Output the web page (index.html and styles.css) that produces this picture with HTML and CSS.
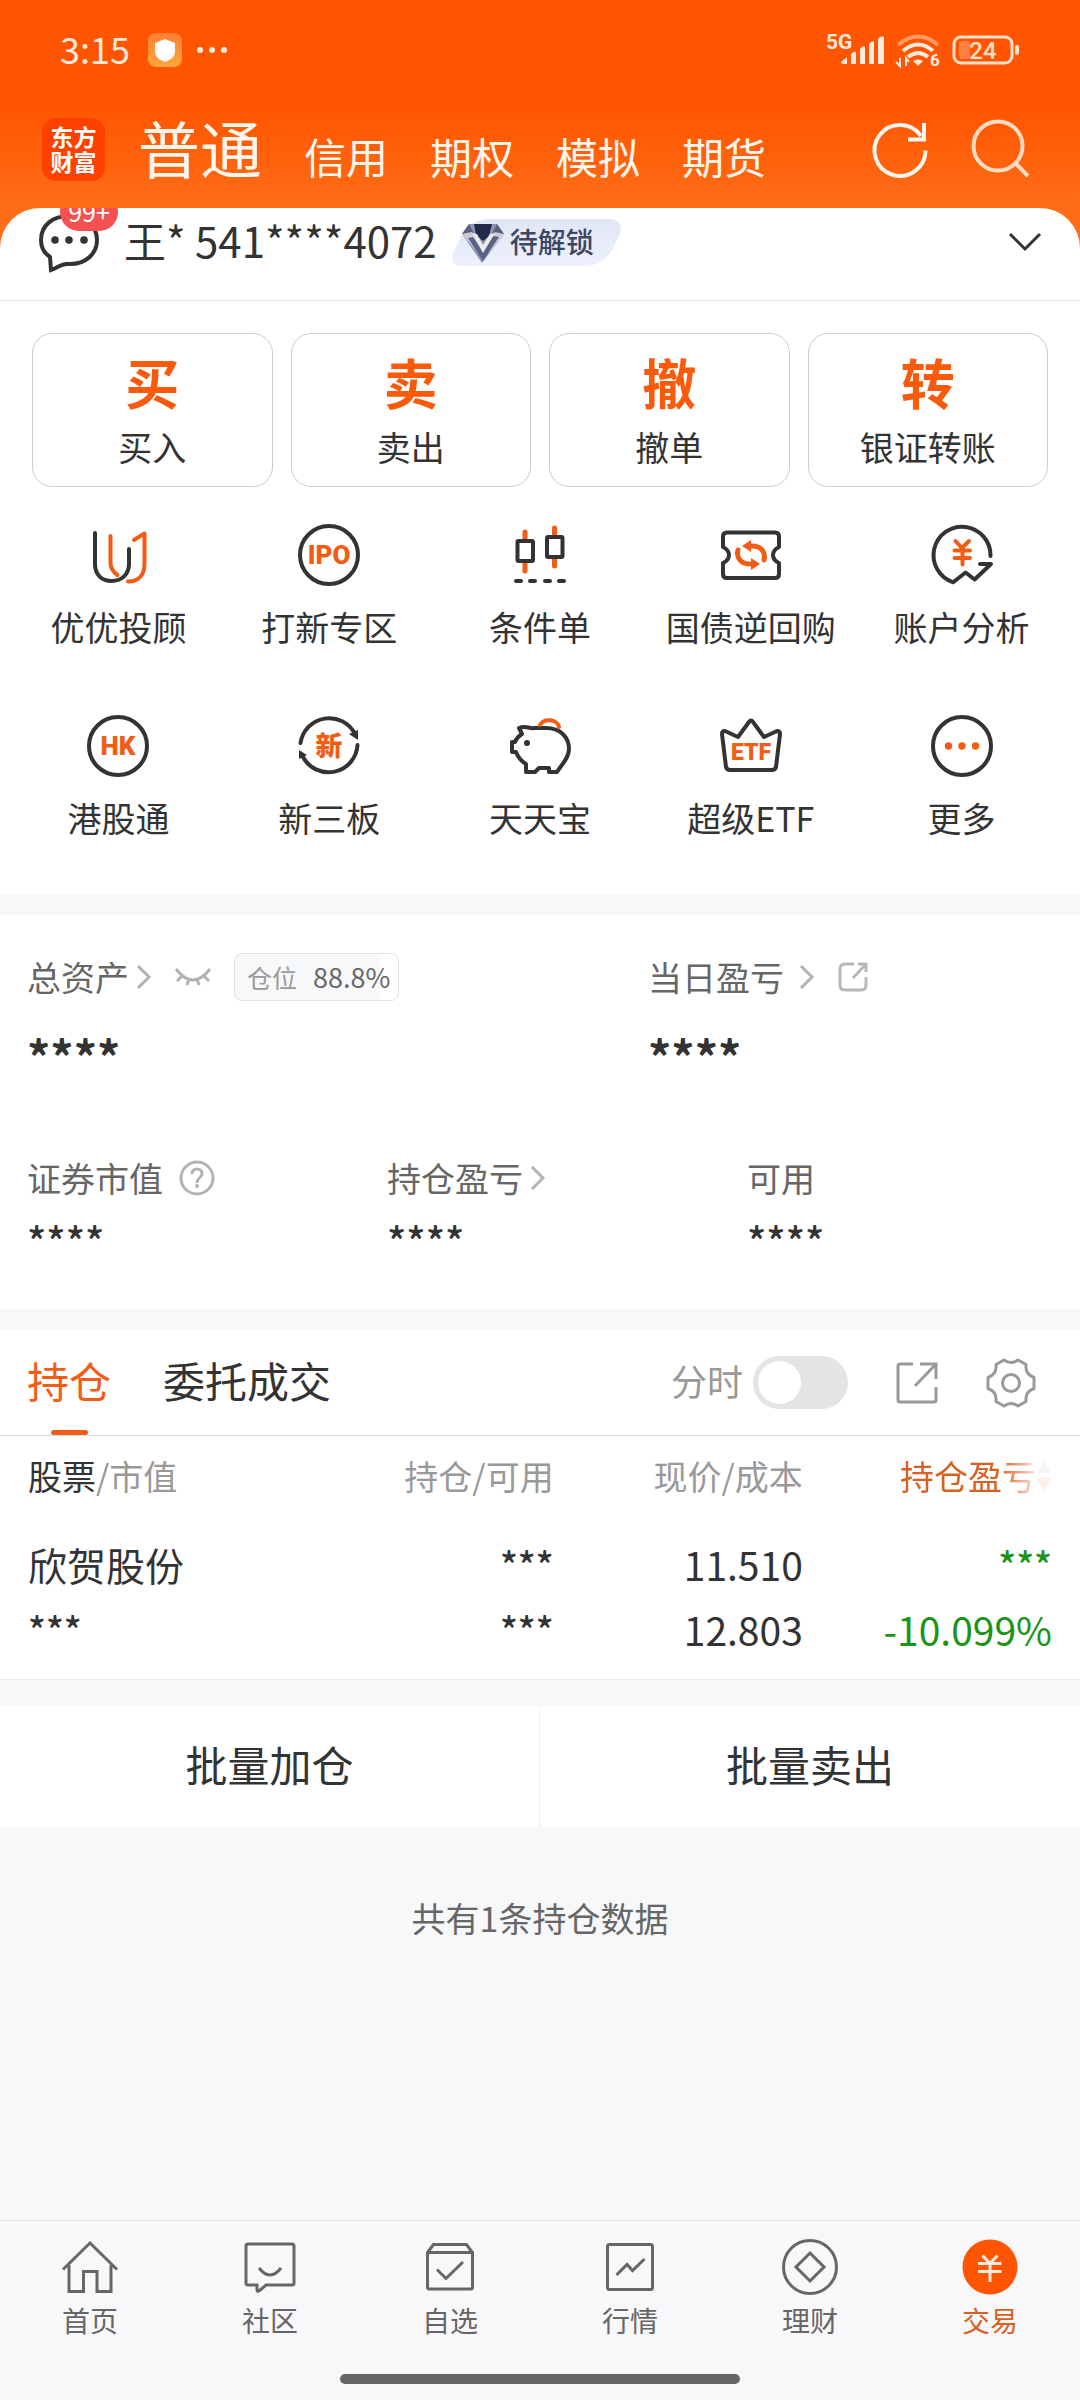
FILE: index.html
```html
<!DOCTYPE html>
<html lang="zh-CN">
<head>
<meta charset="utf-8">
<meta name="viewport" content="width=device-width, initial-scale=1">
<title>交易</title>
<link rel="stylesheet" href="styles.css">
</head>
<body>
<header class="top">
  <div class="status">
    <span class="time">3:15</span>
    <svg class="app-badge" width="34" height="34" viewBox="0 0 34 34"><defs><linearGradient id="g1" x1="0" y1="0" x2="0" y2="1"><stop offset="0" stop-color="#ff7f32"/><stop offset="1" stop-color="#ffa63c"/></linearGradient></defs><rect width="34" height="34" rx="8" fill="url(#g1)"/><path d="M17 6l10 4v9c0 5-5 8-10 10-5-2-10-5-10-10v-9z" fill="#fff"/></svg>
    <svg class="dots" width="32" height="8" viewBox="0 0 32 8" fill="#ffeadd"><circle cx="4" cy="4" r="3"/><circle cx="16" cy="4" r="3"/><circle cx="28" cy="4" r="3"/></svg>
    <svg class="signal" width="58" height="34" viewBox="0 0 58 34" fill="#ffeadd"><text x="0" y="16" class="t5g">5G</text><path d="M15 29l6-5v7h-4q-2 0-2-2zM25 21q3-3 5-2v12h-5zM34 16q3-4 5-2v17h-5zM43 11q3-4 5-2v22h-5zM52 6q3-4 6-2v27h-6z"/></svg>
    <svg class="wifi" width="44" height="34" viewBox="0 0 44 34" fill="none" stroke="#ffeadd" stroke-width="4"><path d="M2 12q20-17 40 0" stroke="#ff9a66"/><path d="M7 18q15-13 30 0M12 24q10-8 20 0"/><path d="M22 33l-5-5q5-3 10 0z" fill="#ffeadd" stroke="none"/><path d="M4 25v8l-4-4M10 33v-8l3 4" stroke-width="2"/><text x="34" y="33" class="t6">6</text></svg>
    <svg class="battery" width="68" height="30" viewBox="0 0 68 30"><rect x="2" y="2" width="58" height="26" rx="7" fill="none" stroke="#ffe0c8" stroke-width="3"/><rect x="7" y="6" width="11" height="18" rx="3" fill="#ff8044"/><rect x="63" y="10" width="4" height="10" rx="2" fill="#ffe0c8"/><text x="31" y="24" class="t24">24</text></svg>
  </div>
  <div class="brand-row">
    <div class="logo">东方<br>财富</div>
    <nav class="markets">
      <a href="#" class="current">普通</a><a href="#">信用</a><a href="#">期权</a><a href="#">模拟</a><a href="#">期货</a>
    </nav>
    <button class="icon-btn" aria-label="刷新"><svg width="60" height="60" viewBox="0 0 60 60" fill="none" stroke="#fff6ee" stroke-width="4"><path d="M55.500 31.500A25.500 25.500 0 1 1 51 17"/><path d="M54 4v16.500H38"/></svg></button>
    <button class="icon-btn" aria-label="搜索"><svg width="60" height="60" viewBox="0 0 60 60" fill="none" stroke="#ffddc2" stroke-width="4"><circle cx="28" cy="27" r="24.500"/><path d="M45 44l13 13"/></svg></button>
  </div>
</header>

<main>
  <section class="account">
    <div class="chat">
      <svg width="62" height="62" viewBox="0 0 62 62" fill="none" stroke="#333" stroke-width="4"><path d="M12 46C6 42 3 36 3 29 3 14 15 5 31 5s28 10 28 24-12 25-29 24c-6-1-9 3-17 6z"/><g fill="#333" stroke="none"><circle cx="17" cy="29" r="3.800"/><circle cx="31" cy="29" r="3.800"/><circle cx="46" cy="29" r="3.800"/></g></svg>
      <span class="count">99+</span>
    </div>
    <span class="acct-name">王* 541****4072</span>
    <a href="#" class="level">
      <svg class="level-bg" width="169" height="47" viewBox="0 0 169 47"><defs><linearGradient id="g2" x1="0" y1="0" x2="0" y2="1"><stop offset="0" stop-color="#e1e6f4"/><stop offset="1" stop-color="#edf1fd"/></linearGradient></defs><path d="M38 0H157q15 0 11 15L160 31Q151 47 133 47H11Q-3 47 1 34L9 18Q18 0 38 0z" fill="url(#g2)"/><path d="M17 5h28l7 10-22 29L10 15z" fill="#8d95b4"/><path d="M17 5l5 10H10zM45 5l-5 10h12z" fill="#5a5f80"/><path d="M22 5h18l-3 12-6 5-7-6z" fill="#23294a"/><path d="M10 15l10-2 11 17 12-17 9 2-15 19h-11z" fill="#c8cbd8"/><path d="M16 19l5-1 10 14 10-15 6 1-16 24z" fill="#5b6283"/><path d="M20 14l5 1 6 11 7-11 5-1-12 20z" fill="#eceae8"/></svg>
      <span>待解锁</span>
    </a>
    <button class="expand" aria-label="展开"><svg width="34" height="20" viewBox="0 0 34 20" fill="none" stroke="#333" stroke-width="3"><path d="M2 2l15 15L32 2"/></svg></button>
  </section>

  <section class="actions">
    <button><b>买</b><span>买入</span></button>
    <button><b>卖</b><span>卖出</span></button>
    <button><b>撤</b><span>撤单</span></button>
    <button><b>转</b><span>银证转账</span></button>
  </section>

  <section class="tools">
    <a href="#"><svg class="ico" viewBox="0 0 64 64"><path d="M9 10V41c0 11 7 17 16.500 17S43 52 43 41V26"/><path class="o" d="M24.500 13V40q0 7 7 12M42 58.500c11 0 16.500-7 16.500-18V10.500L48 17"/></svg>优优投顾</a>
    <a href="#"><svg class="ico" viewBox="0 0 64 64"><circle cx="32" cy="32" r="29"/><text x="32" y="41">IPO</text></svg>打新专区</a>
    <a href="#"><svg class="ico" viewBox="0 0 64 64"><path class="o w5" d="M17 9v7M17 41v7M46.500 5v7M46.500 36v7"/><rect x="9.500" y="18" width="15.500" height="20" rx="1"/><rect x="39" y="14" width="15.500" height="20" rx="1"/><path d="M8 58h5M22 58h5M37 58h5M51 58h5"/></svg>条件单</a>
    <a href="#"><svg class="ico" viewBox="0 0 64 64"><path d="M8 9.500H56q4 0 4 4V24q-6 3-6 8t6 8V51q0 4-4 4H8q-4 0-4-4V40q6-3 6-8t-6-8V13.500q0-4 4-4z"/><path class="o w5" d="M19 27c-2 8 3 14 12 14h2M45 37c2-8-3-14-12-14h-2"/><path class="of" d="M32 35l9 6-9 6zM32 29l-9-6 9-6z"/></svg>国债逆回购</a>
    <a href="#"><svg class="ico" viewBox="0 0 64 64"><path d="M60.500 33A28.500 28.500 0 1 0 23.200 59.300L35.600 49.500l9 7L61 41H50"/><path class="o" d="M25.500 18l6.500 7 7-7M24.500 27.500h15.500M24.500 35h15.500M32.500 26v15.500"/></svg>账户分析</a>
    <a href="#"><svg class="ico" viewBox="0 0 64 64"><circle cx="32" cy="32" r="29"/><text x="32" y="41">HK</text></svg>港股通</a>
    <a href="#"><svg class="ico" viewBox="0 0 64 64"><path d="M3.500 29A29 29 0 0 1 58 20M60.500 31A29 29 0 0 1 6 43"/><path class="df" d="M52 20l9-4v10zM2 45V36l8 5z"/><text x="32" y="42" class="cn">新</text></svg>新三板</a>
    <a href="#"><svg class="ico" viewBox="0 0 64 64"><path d="M11 14c7-3 10 1 15 0H38c14 0 23 9 23 21 0 9-7 15-12 23h-8v-4H31l-4 4H18V50c-5-3-8-7-10-12H4V28h3q2-5 7-8z"/><circle class="df" cx="19" cy="29" r="3"/><path class="o" d="M32 11a10 8 0 0 1 19 2"/></svg>天天宝</a>
    <a href="#"><svg class="ico" viewBox="0 0 64 64"><path d="M6 17l13 6L30 8q2-3 4 0l11 15 13-6q3 0 3 3l-4 33q-1 3-4 3H11q-3 0-4-3L3 20q0-3 3-3z"/><text x="32" y="46" class="etf">ETF</text></svg>超级ETF</a>
    <a href="#"><svg class="ico" viewBox="0 0 64 64"><circle cx="32" cy="32" r="29"/><g class="of"><circle cx="18.500" cy="32" r="3.700"/><circle cx="32" cy="32" r="3.700"/><circle cx="45.500" cy="32" r="3.700"/></g></svg>更多</a>
  </section>

  <section class="assets">
    <div class="asset-row two">
      <div>
        <div class="label"><a href="#">总资产</a><svg class="chev" viewBox="0 0 14 24"><path d="M1 1l11 11L1 23"/></svg>
          <button class="eye" aria-label="显示金额"><svg width="36" height="18" viewBox="0 0 36 18" fill="none" stroke="#b3b3b3" stroke-width="3"><path d="M1 1q17 22 34 0M7 8l-5 5M14 11l-2 6M22 11l2 6M29 8l5 5"/></svg></button>
          <span class="position"><small>仓位</small>88.8%</span></div>
        <div class="value big">****</div>
      </div>
      <div>
        <div class="label wide"><a href="#">当日盈亏</a><svg class="chev" viewBox="0 0 14 24"><path d="M1 1l11 11L1 23"/></svg>
          <button class="share-sm" aria-label="分享"><svg width="32" height="32" viewBox="0 0 32 32" fill="none" stroke="#b8b8b8" stroke-width="3"><path d="M17 3H8Q3 3 3 8V24q0 5 5 5H24q5 0 5-5V16M21 3h8v8M29 3L16 17"/></svg></button></div>
        <div class="value big">****</div>
      </div>
    </div>
    <div class="asset-row three">
      <div><div class="label wide">证券市值<svg class="help" width="36" height="36" viewBox="0 0 36 36"><circle cx="18" cy="18" r="16"/><path d="M13 14q0-5 5-5t5 5c0 3-5 4-5 9"/><circle class="pt" cx="18" cy="26" r="2"/></svg></div><div class="value">****</div></div>
      <div><div class="label"><a href="#">持仓盈亏</a><svg class="chev" viewBox="0 0 14 24"><path d="M1 1l11 11L1 23"/></svg></div><div class="value">****</div></div>
      <div><div class="label">可用</div><div class="value">****</div></div>
    </div>
  </section>

  <section class="holdings">
    <div class="tabs">
      <button class="tab active">持仓</button>
      <button class="tab">委托成交</button>
      <label class="toggle"><span>分时</span><input type="checkbox"></label>
      <button class="tab-icon" aria-label="导出"><svg width="44" height="44" viewBox="0 0 44 44" fill="none" stroke="#999" stroke-width="3"><path d="M18 3H5Q3 3 3 5V39q0 2 2 2H39q2 0 2-2V26M25 3H41V18M41 3L20 25"/></svg></button>
      <button class="tab-icon" aria-label="设置"><svg width="50" height="50" viewBox="0 0 50 50" fill="none" stroke="#999" stroke-width="3" stroke-linejoin="round"><path d="M18 2q7 5 14 0l8 4.500q-1 10 8 13v11q-9 3-8 13L32 48q-7-5-14 0l-8-4.500q1-10-8-13v-11q9-3 8-13z"/><circle cx="25" cy="25" r="8.500"/></svg></button>
    </div>
    <table>
      <thead><tr><th><strong>股票</strong>/市值</th><th>持仓/可用</th><th>现价/成本</th><th><span class="sort">持仓盈亏<svg width="16" height="32" viewBox="0 0 16 32"><path d="M8 0l7 13H1z" fill="#aaa"/><path d="M1 18h14L8 31z" fill="#ff5500"/></svg></span></th></tr></thead>
      <tbody><tr>
        <td><div>欣贺股份</div><div class="mask">***</div></td>
        <td><div class="mask">***</div><div class="mask">***</div></td>
        <td><div>11.510</div><div>12.803</div></td>
        <td class="down"><div class="mask">***</div><div>-10.099%</div></td>
      </tr></tbody>
    </table>
  </section>

  <div class="batch"><button>批量加仓</button><button>批量卖出</button></div>
  <p class="summary">共有1条持仓数据</p>
</main>

<footer>
  <nav class="bottom-nav">
    <a href="#"><svg viewBox="0 0 64 64"><path d="M5 34.500L32 8l27 26.500M11 30V56.500H25.500V36.500H39V56.500H53V30"/></svg>首页</a>
    <a href="#"><svg viewBox="0 0 64 64"><path d="M10 9H54q2 0 2 2V48q0 2-2 2H28l-7 6q-2 1-2-1V50H10q-2 0-2-2V11q0-2 2-2zM21 33q11 14 22 0"/></svg>社区</a>
    <a href="#"><svg viewBox="0 0 64 64"><path d="M9.500 17.500l6-8H48.500l6 8V52q0 2-2 2H11.500q-2 0-2-2zH54.500M19 34.500l9 9L45 27"/></svg>自选</a>
    <a href="#"><svg viewBox="0 0 64 64"><rect x="9.500" y="9.500" width="45" height="45" rx="2"/><path d="M18.500 40l10.500-10.500 5.500 6L46.500 24"/></svg>行情</a>
    <a href="#"><svg viewBox="0 0 64 64"><circle cx="32" cy="32" r="26.500"/><path d="M32 18l14 14-14 14-14-14z"/></svg>理财</a>
    <a href="#" class="on"><svg viewBox="0 0 64 64"><circle cx="32" cy="32" r="27.500" fill="#ff5500" stroke="none"/><path stroke="#ffeadd" d="M24.500 20.500L32 28.500l7.500-8M20 28.500H43.500M20 36.500H43.500M32 28V47"/></svg>交易</a>
  </nav>
  <div class="home-bar"></div>
</footer>
</body>
</html>
```

FILE: styles.css
```css
* { box-sizing: border-box; }

body {
  margin: 0;
  min-height: 100vh;
  display: flex;
  flex-direction: column;
  background: #f7f8fa;
  color: #333;
  font-family: "Noto Sans CJK SC", sans-serif;
  font-size: 34px;
  line-height: 48px;
}

a { color: inherit; text-decoration: none; }
button {
  margin: 0;
  padding: 0;
  border: 0;
  background: none;
  color: inherit;
  font: inherit;
}
svg { display: block; flex: none; overflow: visible; }

/* header */
.top {
  height: 248px;
  background: linear-gradient(#ff5500 105px, #ff6d18 208px);
}
.status {
  height: 100px;
  padding: 0 60px;
  display: flex;
  align-items: center;
}
.time {
  margin-right: 18px;
  padding-bottom: 4px;
  color: #ffeadd;
  font-size: 36px;
}
.dots { margin-left: 14px; margin-right: auto; }
.wifi { margin: 0 12px; }
.status text { font-family: Roboto, sans-serif; }
.t5g { font-size: 21px; font-weight: 700; }
.t6 { font-size: 17px; font-weight: 700; fill: #ffeadd; stroke: none; }
.t24 { font-size: 24px; font-weight: 500; fill: #ffe0c8; text-anchor: middle; }

.brand-row {
  height: 98px;
  padding: 0 50px 0 42px;
  display: flex;
  align-items: center;
}
.logo {
  width: 63px;
  height: 63px;
  padding: 6px 0;
  border-radius: 14px;
  background: #ff4100;
  color: #fff;
  text-align: center;
  font-size: 23px;
  font-weight: 700;
  line-height: 25px;
}
.markets {
  flex: 1;
  margin-left: 33px;
  padding-top: 4px;
  display: flex;
  align-items: baseline;
  gap: 42px;
  color: #fff6ee;
  font-size: 42px;
  line-height: 80px;
}
.markets .current { font-size: 62px; }
.icon-btn { margin-left: 40px; }

/* account strip */
main {
  flex: 1;
  margin-top: -40px;
}
.account {
  height: 93px;
  padding: 0 38px 24px;
  display: flex;
  align-items: center;
  border-bottom: 1px solid #e5e5e7;
  border-radius: 40px 40px 0 0;
  background: #fff;
  overflow: hidden;
}
.chat { position: relative; }
.count {
  position: absolute;
  left: 22px;
  top: -18px;
  width: 58px;
  height: 38px;
  border-radius: 19px;
  background: #f55152;
  color: #fff;
  text-align: center;
  font-size: 25px;
  line-height: 36px;
}
.acct-name {
  margin: 0 15px 0 24px;
  padding-bottom: 4px;
  font-size: 42px;
}
.level {
  position: relative;
  width: 169px;
  height: 47px;
  padding-left: 58px;
  color: #3c4763;
  font-size: 28px;
  font-weight: 500;
  line-height: 44px;
}
.level-bg { position: absolute; inset: 0; }
.level span { position: relative; }
.expand { margin-left: auto; }

/* primary actions */
.actions {
  padding: 32px 32px 0;
  display: grid;
  grid-template-columns: repeat(4, 1fr);
  gap: 18px;
  background: #fff;
}
.actions button {
  height: 154px;
  padding-bottom: 4px;
  display: flex;
  flex-direction: column;
  align-items: center;
  justify-content: center;
  gap: 5px;
  border: 1px solid #ccc;
  border-radius: 20px;
}
.actions b {
  color: #fa5a0c;
  font-size: 54px;
  line-height: 72px;
}

/* shortcut grid */
.tools {
  padding: 36px 13px 46px;
  display: grid;
  grid-template-columns: repeat(5, 1fr);
  row-gap: 57px;
  background: #fff;
}
.tools a {
  display: flex;
  flex-direction: column;
  align-items: center;
  gap: 16px;
  height: 134px;
}
.ico {
  width: 64px;
  height: 64px;
  fill: none;
  stroke: #333;
  stroke-width: 4;
  stroke-linecap: round;
  stroke-linejoin: round;
}
.ico .o { stroke: #f35c14; }
.ico .w5 { stroke-width: 5; }
.ico .of { fill: #f35c14; stroke: none; }
.ico .df { fill: #333; stroke: none; }
.ico text {
  fill: #f35c14;
  stroke: none;
  text-anchor: middle;
  font-family: Roboto, sans-serif;
  font-size: 26px;
  font-weight: 900;
}
.ico .etf { font-size: 23px; }
.ico .cn { font-family: "Noto Sans CJK SC", sans-serif; font-size: 27px; }

/* assets */
.assets {
  margin-top: 21px;
  padding: 38px 0 45px;
  background: #fff;
  color: #666;
}
.asset-row { display: grid; }
.asset-row > div { padding-left: 27px; }
.two { grid-template-columns: 23fr 17fr; }
.three { grid-template-columns: repeat(3, 1fr); margin-top: 71px; }
.label {
  height: 48px;
  display: flex;
  align-items: center;
  gap: 8px;
}
.label.wide { gap: 16px; }
.chev {
  width: 14px;
  height: 24px;
  fill: none;
  stroke: #b3b3b3;
  stroke-width: 3;
}
.eye { margin-left: 16px; }
.share-sm { margin-left: 7px; }
.position {
  width: 165px;
  height: 48px;
  margin-left: 15px;
  padding-left: 12px;
  display: flex;
  align-items: center;
  gap: 16px;
  border: 1px solid #e2e2e4;
  border-radius: 8px;
  background: linear-gradient(90deg, #f7f8fa 88.8%, #fff 88.8%);
  font-size: 27px;
}
.position small { color: #999; font-size: 25px; }
.help { fill: none; stroke: #b3b3b3; stroke-width: 3; }
.help .pt { fill: #b3b3b3; stroke: none; }
.value {
  margin-top: 14px;
  color: #333;
  font-size: 40px;
  font-weight: 500;
}
.value.big {
  margin-top: 26px;
  font-size: 46px;
  font-weight: 700;
  line-height: 56px;
}

/* holdings */
.holdings {
  margin-top: 21px;
  border-bottom: 1px solid #ececee;
  background: #fff;
}
.tabs {
  height: 106px;
  padding: 0 44px 0 27px;
  display: flex;
  align-items: center;
  border-bottom: 1px solid #dcdcde;
}
.tab {
  position: relative;
  height: 105px;
  margin-right: 52px;
  padding-bottom: 6px;
  font-size: 42px;
}
.tab.active { color: #f35c14; }
.tab.active::after {
  content: "";
  position: absolute;
  left: 50%;
  bottom: 0;
  width: 37px;
  height: 5px;
  margin-left: -18px;
  border-radius: 3px;
  background: #f35c14;
}
.toggle {
  margin-left: auto;
  display: flex;
  align-items: center;
  gap: 10px;
  color: #999;
  font-size: 36px;
}
.toggle span { padding-bottom: 6px; }
.toggle input {
  appearance: none;
  width: 95px;
  height: 53px;
  margin: 0;
  padding: 5px;
  border-radius: 27px;
  background: #e4e4e6;
}
.toggle input::before {
  content: "";
  display: block;
  width: 43px;
  height: 43px;
  border-radius: 50%;
  background: #fff;
}
.toggle input:checked::before { margin-left: auto; }
.tab-icon { margin-left: 47px; }

table {
  width: 100%;
  padding: 0 28px 17px;
  border-spacing: 0;
  table-layout: fixed;
}
th, td { padding: 0; text-align: right; }
th:first-child, td:first-child { width: 27%; text-align: left; }
th {
  height: 96px;
  padding-bottom: 16px;
  color: #999;
  font-weight: 400;
  white-space: nowrap;
}
th strong { color: #333; font-weight: 400; }
.sort {
  display: inline-flex;
  align-items: center;
  vertical-align: top;
  color: #d9601f;
  -webkit-mask-image: linear-gradient(90deg, #000 65%, rgba(0, 0, 0, .1) 92%);
  mask-image: linear-gradient(90deg, #000 65%, rgba(0, 0, 0, .1) 92%);
}
td { font-size: 39px; line-height: 65px; }
td div { height: 65px; }
.mask { font-size: 37px; font-weight: 500; }
.down { color: #1a951a; }

.batch {
  margin-top: 26px;
  display: grid;
  grid-template-columns: 1fr 1fr;
  background: #fff;
}
.batch button { height: 121px; padding-bottom: 6px; font-size: 42px; }
.batch button:first-child { border-right: 1px solid #f0f0f2; }
.summary {
  margin: 67px 0;
  color: #666;
  text-align: center;
}

/* bottom navigation */
footer {
  padding-bottom: 16px;
  border-top: 1px solid #e2e4e6;
  background: #f8f8fa;
}
.bottom-nav {
  padding-top: 14px;
  display: grid;
  grid-template-columns: repeat(6, 1fr);
  color: #666;
  font-size: 28px;
  line-height: 42px;
}
.bottom-nav a {
  display: flex;
  flex-direction: column;
  align-items: center;
}
.bottom-nav svg {
  width: 64px;
  height: 64px;
  fill: none;
  stroke: #666;
  stroke-width: 3;
}
.bottom-nav .on { color: #d9601f; }
.home-bar {
  width: 37%;
  height: 10px;
  margin: 33px auto 0;
  border-radius: 5px;
  background: #666;
}
```
